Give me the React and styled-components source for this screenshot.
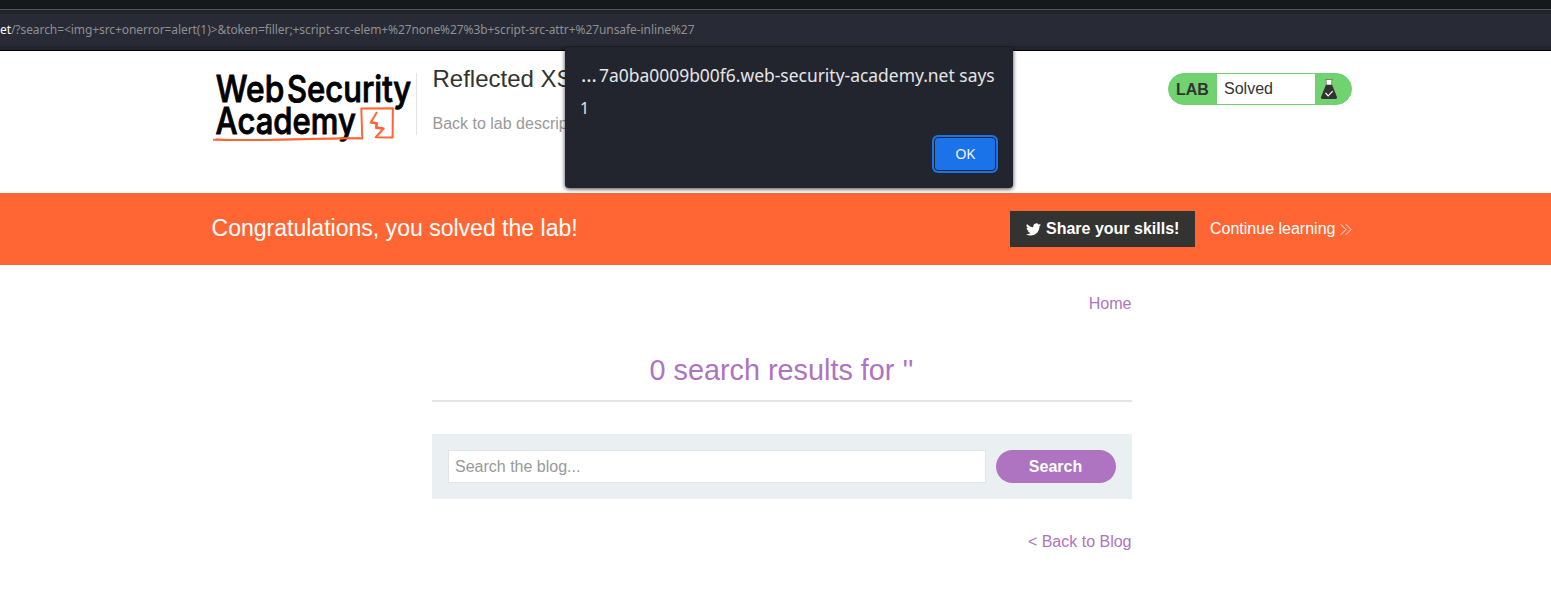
import React from "react";
import styled, { createGlobalStyle } from "styled-components";

const Global = createGlobalStyle`
  *, *::before, *::after { box-sizing: border-box; }
  html, body { margin: 0; padding: 0; }
  body {
    background: #fff;
    color: #333332;
    font: 16px/20px "Liberation Sans", Arial, sans-serif;
    overflow: hidden;
  }
`;

const Page = styled.div`
  height: 595px;
  overflow: hidden;
`;

const TabStrip = styled.div`
  height: 10px;
  background: #17181c;
  border-bottom: 1px solid #55565a;
`;

const AddressBar = styled.div`
  height: 41px;
  display: flex;
  align-items: center;
  background: linear-gradient(#22242d 0 4px, #282a36 4px 36px, #22242d 36px);
  border-bottom: 1px solid #000;
  font: 12px/18px "Noto Sans", sans-serif;
  white-space: pre;
`;

const Url = styled.span`
  color: #8e9090;
  letter-spacing: -0.077px;
`;

const Host = styled.span`
  color: #fff;
`;

const Container = styled.div`
  width: 1140px;
  margin-left: 212px;
  display: flex;
`;

const LabHeader = styled.header`
  height: 142px;
  padding-top: 22px;
`;

const LogoBox = styled.div`
  width: 205px;
  height: 62px;
  border-right: 1px solid #e4e4e4;

  svg {
    display: block;
    overflow: visible;
  }
`;

const LabTitle = styled.div`
  flex: 1;
  padding-left: 15.5px;
  white-space: nowrap;

  h2 {
    margin: -8px 0 0;
    font-size: 24px;
    font-weight: 400;
    line-height: 28px;
  }
`;

const BackLink = styled.a`
  display: block;
  margin-top: 21px;
  color: #999;
`;

const LabStatus = styled.div`
  display: flex;
  width: 184px;
  height: 32px;
  border: 1px solid #6fd26f;
  border-radius: 16px;
  overflow: hidden;
  background: #71d36f;
  line-height: 30px;
`;

const LabTag = styled.span`
  width: 48px;
  padding-left: 7px;
  font-weight: 700;
  line-height: 31px;
`;

const LabState = styled.span`
  width: 98px;
  padding-left: 7px;
  background: #fff;
`;

const FlaskBox = styled.span`
  padding: 4px 0 0 5px;

  svg { display: block; }
`;

const Banner = styled.section`
  height: 72px;
  display: flex;
  align-items: center;
  background: #ff6633;
  color: #fff;
`;

const BannerRow = styled(Container)`
  align-items: center;
`;

const BannerText = styled.h4`
  flex: 1;
  margin: -2px 0 0 -0.5px;
  font-size: 23.04px;
  font-weight: 400;
  line-height: 28px;
`;

const ShareButton = styled.button`
  width: 185px;
  height: 36px;
  display: flex;
  align-items: center;
  gap: 5px;
  padding: 0 0 0 16px;
  border: 0;
  background: #333332;
  color: #fff;
  font: 700 16px/20px "Liberation Sans", Arial, sans-serif;
  white-space: nowrap;
`;

const ContinueLink = styled.a`
  width: 157px;
  display: flex;
  align-items: center;
  gap: 5px;
  padding-left: 15px;
  white-space: nowrap;
`;

const Blog = styled.main`
  width: 700px;
  margin: 29px 0 0 432px;
`;

const PurpleLink = styled.a`
  display: block;
  padding-right: 0.5px;
  color: #ae74c2;
  text-align: right;
`;

const ResultsTitle = styled.h1`
  height: 62px;
  margin: 26px 0 32px;
  padding: 13px 1px 0 0;
  border-bottom: 2px solid #e4e4e4;
  color: #ae74c2;
  font-size: 28.8px;
  font-weight: 400;
  line-height: 34px;
  text-align: center;
`;

const SearchPanel = styled.form`
  height: 65px;
  display: flex;
  gap: 10px;
  margin-bottom: 33px;
  padding: 16px;
  background: #eaeff2;
`;

const SearchInput = styled.input`
  width: 538px;
  height: 33px;
  padding: 0 6px;
  border: 1px solid #e4e4e4;
  border-radius: 0;
  outline: 0;
  background: #fff;
  font: 16px "Liberation Sans", Arial, sans-serif;

  &::placeholder { color: #999; opacity: 1; }
`;

const SearchButton = styled.button`
  width: 120px;
  height: 33px;
  padding: 0 1px 0 0;
  border: 0;
  border-radius: 17px;
  background: #ae74c2;
  color: #fff;
  font: 700 16px "Liberation Sans", Arial, sans-serif;
`;

const Dialog = styled.div`
  position: absolute;
  left: 565px;
  top: 47px;
  width: 448px;
  height: 141px;
  padding: 17px 16px 0 17px;
  border-radius: 4px;
  background: #23252e;
  color: #e4e6e6;
  box-shadow: 0 1px 4px rgba(0, 0, 0, 0.75);
  font-family: "Noto Sans", sans-serif;
`;

const DialogTitle = styled.div`
  display: flex;
  margin-left: -1px;
  font-size: 17.45px;
  line-height: 22px;
  white-space: nowrap;
`;

const Ellipsis = styled.span`
  width: 18px;
  font-size: 20px;
`;

const DialogMessage = styled.div`
  margin-top: 11px;
  margin-left: -2px;
  font-size: 16px;
  line-height: 22px;
`;

const OkButton = styled.button`
  display: block;
  width: 62px;
  height: 34px;
  margin: 18px 1px 0 auto;
  padding: 0 0 2px;
  border: 1px solid #23252e;
  border-radius: 4px;
  background: #1a73e8;
  box-shadow: 0 0 0 2px #1a73e8;
  color: #f1f5f9;
  font: 14.5px/30px "Noto Sans", sans-serif;
  letter-spacing: -0.3px;
`;

const Logo = () => (
  <svg width="202" height="72" viewBox="0 0 202 72">
    <g fill="#000" stroke="#000" strokeWidth="0.9" fontFamily="Inter, sans-serif" fontWeight="500" fontSize="36.5">
      <text x="3.8" y="29" textLength="68.5" lengthAdjust="spacingAndGlyphs">Web</text>
      <text x="75" y="29" textLength="124.2" lengthAdjust="spacingAndGlyphs">Security</text>
      <text x="3.6" y="61.2" textLength="140.2" lengthAdjust="spacingAndGlyphs">Academy</text>
    </g>
    <g fill="none" stroke="#ff6633" strokeLinejoin="round">
      <path d="M1 66.8C30 67.5 60 67 90 66.2S135 65 150.3 65.5L149.3 35.6 180.9 35.2 180.6 64.4 163.7 64.2 171.7 55.5 164 55 164.7 50.2 158.7 49.6 165 39" strokeWidth="2" />
      <path d="M4 66.2C45 67.8 95 66 149 65.3" strokeWidth="1.6" />
      <path d="M159.5 49.5 164.7 50.2 164.4 54.5 171 55.5" strokeWidth="2.4" />
    </g>
  </svg>
);

const Flask = () => (
  <svg width="18" height="22" viewBox="0 0 18 22">
    <path d="M6 2h6v5H6z" fill="#fff" />
    <path d="M5 1.5h8M6.3 2v5M11.7 2v5" stroke="#777" strokeWidth="0.8" fill="none" />
    <path d="M6 6.7h6L17 19Q17.4 21 15.5 21H2.5Q.6 21 1 19Z" fill="#333332" />
    <path d="m5.5 15 2.7 2.8 4.5-4.6" fill="none" stroke="#fff" strokeWidth="1.2" />
  </svg>
);

const Bird = () => (
  <svg width="15" height="15" viewBox="0 2 24 20">
    <path
      fill="#fff"
      d="M23.95 4.57a10 10 0 0 1-2.82.77 4.96 4.96 0 0 0 2.16-2.72c-.95.55-2 .95-3.13 1.18a4.92 4.92 0 0 0-8.38 4.48C7.69 8.1 4.07 6.13 1.64 3.16a4.92 4.92 0 0 0 1.52 6.57 4.9 4.9 0 0 1-2.23-.61v.06a4.92 4.92 0 0 0 3.95 4.83 5 5 0 0 1-2.21.08 4.94 4.94 0 0 0 4.6 3.42A9.87 9.87 0 0 1 0 19.54a13.99 13.99 0 0 0 7.55 2.21c9.05 0 14-7.5 14-13.98 0-.21 0-.42-.02-.63a9.94 9.94 0 0 0 2.46-2.55z"
    />
  </svg>
);

const Chevrons = () => (
  <svg width="13" height="13" viewBox="0 0 13 13">
    <path d="m.7.5 6 6-6 6M6.4.5l6 6-6 6" fill="none" stroke="#fff" strokeWidth="1" />
  </svg>
);

export default function App() {
  return (
    <Page>
      <Global />
      <TabStrip />
      <AddressBar>
        <Url>
          <Host>et</Host>
          {"/?search=<img+src+onerror=alert(1)>&token=filler;+script-src-elem+%27none%27%3b+script-src-attr+%27unsafe-inline%27"}
        </Url>
      </AddressBar>
      <LabHeader>
        <Container>
          <LogoBox><Logo /></LogoBox>
          <LabTitle>
            <h2>Reflected XSS</h2>
            <BackLink>Back to lab description</BackLink>
          </LabTitle>
          <LabStatus>
            <LabTag>LAB</LabTag>
            <LabState>Solved</LabState>
            <FlaskBox><Flask /></FlaskBox>
          </LabStatus>
        </Container>
      </LabHeader>
      <Banner>
        <BannerRow>
          <BannerText>Congratulations, you solved the lab!</BannerText>
          <ShareButton><Bird />Share your skills!</ShareButton>
          <ContinueLink>Continue learning<Chevrons /></ContinueLink>
        </BannerRow>
      </Banner>
      <Blog>
        <PurpleLink>Home</PurpleLink>
        <ResultsTitle>0 search results for ''</ResultsTitle>
        <SearchPanel onSubmit={(e) => e.preventDefault()}>
          <SearchInput placeholder="Search the blog..." />
          <SearchButton>Search</SearchButton>
        </SearchPanel>
        <PurpleLink>&lt; Back to Blog</PurpleLink>
      </Blog>
      <Dialog role="alertdialog">
        <DialogTitle><Ellipsis>…</Ellipsis>7a0ba0009b00f6.web-security-academy.net says</DialogTitle>
        <DialogMessage>1</DialogMessage>
        <OkButton>OK</OkButton>
      </Dialog>
    </Page>
  );
}
